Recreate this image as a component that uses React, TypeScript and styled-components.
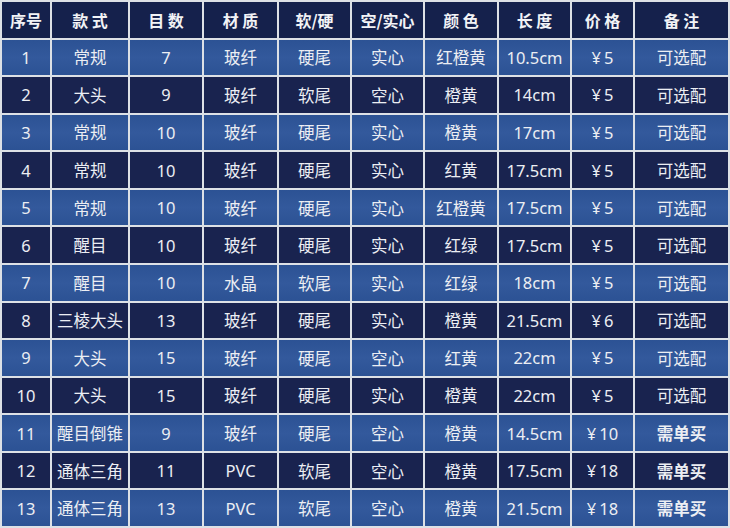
import styled, { createGlobalStyle } from "styled-components";

const GlobalStyle = createGlobalStyle`
  html, body {
    margin: 0;
    padding: 0;
    background: #ffffff;
  }
`;

type Row = string[];

const HEADERS = ["序号", "款 式", "目 数", "材 质", "软/硬", "空/实心", "颜 色", "长 度", "价 格", "备 注"];

const ROWS: Row[] = [
  ["1", "常规", "7", "玻纤", "硬尾", "实心", "红橙黄", "10.5cm", "¥5", "可选配"],
  ["2", "大头", "9", "玻纤", "软尾", "空心", "橙黄", "14cm", "¥5", "可选配"],
  ["3", "常规", "10", "玻纤", "硬尾", "实心", "橙黄", "17cm", "¥5", "可选配"],
  ["4", "常规", "10", "玻纤", "硬尾", "实心", "红黄", "17.5cm", "¥5", "可选配"],
  ["5", "常规", "10", "玻纤", "硬尾", "实心", "红橙黄", "17.5cm", "¥5", "可选配"],
  ["6", "醒目", "10", "玻纤", "硬尾", "实心", "红绿", "17.5cm", "¥5", "可选配"],
  ["7", "醒目", "10", "水晶", "软尾", "实心", "红绿", "18cm", "¥5", "可选配"],
  ["8", "三棱大头", "13", "玻纤", "硬尾", "实心", "橙黄", "21.5cm", "¥6", "可选配"],
  ["9", "大头", "15", "玻纤", "硬尾", "空心", "红黄", "22cm", "¥5", "可选配"],
  ["10", "大头", "15", "玻纤", "硬尾", "实心", "橙黄", "22cm", "¥5", "可选配"],
  ["11", "醒目倒锥", "9", "玻纤", "硬尾", "空心", "橙黄", "14.5cm", "¥10", "需单买"],
  ["12", "通体三角", "11", "PVC", "软尾", "空心", "橙黄", "17.5cm", "¥18", "需单买"],
  ["13", "通体三角", "13", "PVC", "软尾", "空心", "橙黄", "21.5cm", "¥18", "需单买"],
];

const App = (): JSX.Element => {
  return (
    <>
      <GlobalStyle />
      <Table>
        {HEADERS.map((h) => (
          <HeadCell key={h}>{h}</HeadCell>
        ))}
        {ROWS.map((row, i) =>
          row.map((cell, j) => (
            <Cell
              key={`${i}-${j}`}
              $light={i % 2 === 0}
              $bold={cell === "需单买"}
            >
              {cell.startsWith("¥") ? (
                <>
                  <Yen>¥</Yen>
                  {cell.slice(1)}
                </>
              ) : (
                cell
              )}
            </Cell>
          ))
        )}
      </Table>
    </>
  );
};

let Table = styled.div`
  width: 730px;
  height: 528px;
  box-sizing: border-box;
  padding: 2px;
  display: grid;
  grid-template-columns: 48px 76px 72px 73px 71px 71px 72px 71px 61px 93px;
  grid-template-rows: repeat(14, 1fr);
  gap: 2px;
  background: #dde1e6;
  font-family: "Noto Sans", "Noto Sans CJK SC", sans-serif;
`;

let HeadCell = styled.div`
  display: flex;
  align-items: center;
  justify-content: center;
  background: #15214c;
  color: #f2f3f6;
  font-family: "Noto Sans CJK SC", sans-serif;
  font-size: 16px;
  font-weight: 700;
  white-space: pre;
`;

let Cell = styled.div<{ $light: boolean; $bold: boolean }>`
  display: flex;
  align-items: center;
  justify-content: center;
  background: ${(p) =>
    p.$light
      ? "linear-gradient(180deg, #2c5294 0%, #33599c 50%, #2c5294 100%)"
      : "#19234f"};
  color: #eceef3;
  font-size: 16.5px;
  font-weight: ${(p) => (p.$bold ? 700 : 400)};
  white-space: nowrap;
`;

let Yen = styled.span`
  margin-right: 3px;
`;

export default App;
